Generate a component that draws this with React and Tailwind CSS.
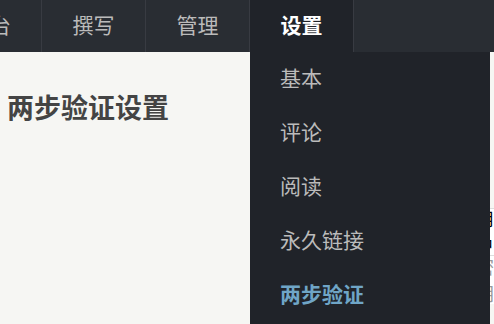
const navItems = [
  { label: '控制台', width: 'w-[124px]' },
  { label: '撰写', width: 'w-[104px]' },
  { label: '管理', width: 'w-[104px]' },
];

const menuItems = ['基本', '评论', '阅读', '永久链接', '两步验证'];

export default function App() {
  return (
    <div
      className="relative w-[494px] h-[324px] overflow-hidden bg-[#f6f6f3]"
      style={{ fontFamily: '"Noto Sans CJK SC", "Noto Sans", sans-serif' }}
    >
      {/* Top nav */}
      <div className="h-[52px] bg-[#292d33] flex overflow-hidden">
        <div className="flex -ml-[82px] shrink-0">
          {navItems.map((item) => (
            <div
              key={item.label}
              className={`${item.width} h-[52px] pb-[3px] flex items-center justify-center border-r border-[#383b42] text-[21px] text-[#bbbbbb]`}
            >
              {item.label}
            </div>
          ))}
          <div className="w-[104px] h-[52px] pb-[3px] flex items-center justify-center border-r border-[#383b42] bg-[#202329] text-[21px] font-bold text-white">
            设置
          </div>
        </div>
      </div>

      {/* Content */}
      <div className="flex">
        <div className="w-[300px] pl-[7px] pt-[36px]">
          <h2 className="text-[27px] leading-[38px] font-bold text-[#444444]">两步验证设置</h2>
        </div>
        <div className="flex-1 mt-[156px]">
          <div className="h-[48px] bg-white border-y border-[#dddddd] flex items-center pl-[190px] text-[18px] text-black">
            用户
          </div>
          <div className="h-[48px] bg-white flex items-center pl-[190px] text-[18px] text-[#999999]">
            密钥
          </div>
        </div>
      </div>

      {/* Dropdown menu */}
      <div className="absolute left-[250px] top-[52px] w-[240px] h-[272px] bg-[#202329]">
        {menuItems.map((label, i) => (
          <div
            key={label}
            className={`h-[54px] pb-[3px] flex items-center pl-[30px] text-[21px] ${
              i === menuItems.length - 1 ? 'font-bold text-[#6fa5c6]' : 'text-[#bbbbbb]'
            }`}
          >
            {label}
          </div>
        ))}
      </div>
    </div>
  );
}
